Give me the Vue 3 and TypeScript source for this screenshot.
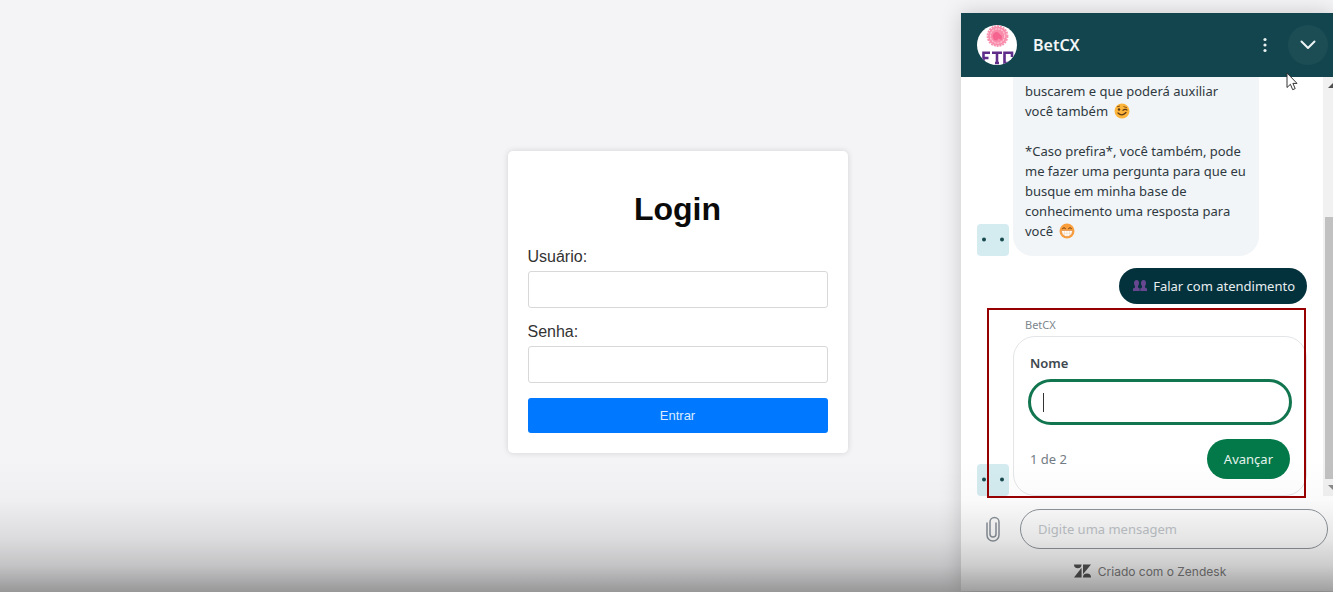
<script setup lang="ts">
import { ref } from 'vue'

const user = ref('')
const password = ref('')
const fullName = ref('')
const draft = ref('')
</script>

<template>
  <div class="page">
    <main class="stage">
      <form class="login" @submit.prevent>
        <h1>Login</h1>
        <label for="user">Usuário:</label>
        <input id="user" v-model="user" type="text" />
        <label for="password">Senha:</label>
        <input id="password" v-model="password" type="password" />
        <button type="submit">Entrar</button>
      </form>
    </main>

    <aside class="chat" aria-label="BetCX">
      <header class="chat-head">
        <svg class="brand" viewBox="0 0 40 40" aria-hidden="true">
          <defs><clipPath id="disc"><circle cx="20" cy="20" r="20" /></clipPath></defs>
          <g clip-path="url(#disc)">
            <rect width="40" height="40" fill="#fff" />
            <circle cx="20.500" cy="11" r="9.500" fill="#f98bab" />
            <circle cx="20.500" cy="11" r="10" fill="none" stroke="#f78fae" stroke-width="1.800" stroke-dasharray="2 .9" />
            <circle cx="20.500" cy="11" r="7.200" fill="none" stroke="#fdc3d2" stroke-width="1.200" stroke-dasharray="2.200 .9" />
            <path d="M15.500 11.500c.2-3 2.500-5 5-4.500l4.500 4-.5 4-3-1.500-1.500 2-3-.5z" fill="#f4648f" />
            <g fill="none" stroke="#5f2c8a" stroke-width="2.600">
              <path d="M13 27.800H6.500V42M6 33h5.500" />
              <path d="M15 27.800h10M20 27v11.500M18 38h4" />
              <path d="M35 32v-4.200h-7.500V38H35v-2" />
            </g>
          </g>
        </svg>
        <h2>BetCX</h2>
        <button class="icon-btn more" type="button" aria-label="Mais opções">
          <svg viewBox="0 0 4 16"><g fill="#e8f0f0"><circle cx="2" cy="2.500" r="1.600" /><circle cx="2" cy="8" r="1.600" /><circle cx="2" cy="13.500" r="1.600" /></g></svg>
        </button>
        <button class="icon-btn fold" type="button" aria-label="Minimizar">
          <svg viewBox="0 0 16 10"><path d="M1.500 1.500 8 8l6.500-6.500" fill="none" stroke="#eef4f4" stroke-width="2" stroke-linecap="round" stroke-linejoin="round" /></svg>
        </button>
      </header>

      <div class="log">
        <div class="messages">
          <div class="row">
            <svg class="bot" viewBox="0 0 32 32" aria-hidden="true"><rect width="32" height="32" rx="4" fill="#d4ebf0" /><g fill="#17494d"><circle cx="7" cy="15.500" r="2" /><circle cx="25" cy="15.500" r="2" /></g></svg>
            <div class="bubble">
              <p>
                buscarem e que poderá auxiliar<br />você também
                <svg class="emoji" viewBox="0 0 16 16" role="img" aria-label="piscadela">
                  <circle cx="8" cy="8" r="7.500" fill="#fdb43b" />
                  <path d="M3 3.800 6 3M9.500 3.500 13 4.800" stroke="#8a5313" fill="none" />
                  <circle cx="5" cy="6.500" r="1.200" fill="#5b3716" />
                  <path d="M9 7.300q2-1.600 4-.3M4 10q4 4 8-.500" stroke="#5b3716" stroke-width="1.200" fill="none" stroke-linecap="round" />
                </svg>
              </p>
              <p>
                *Caso prefira*, você também, pode<br />me fazer uma pergunta para que eu<br />busque em minha base de<br />conhecimento uma resposta para<br />você
                <svg class="emoji" viewBox="0 0 16 16" role="img" aria-label="sorriso">
                  <circle cx="8" cy="8" r="7.500" fill="#fb9f3c" />
                  <path d="M3.500 5.500q1.500-2 3 0M9.500 5.500q1.500-2 3 0" stroke="#6b3a12" fill="none" stroke-linecap="round" />
                  <path d="M2.500 7.500h11c0 3.500-2.200 6-5.500 6s-5.500-2.500-5.500-6z" fill="#fff" stroke="#d97f33" stroke-width=".6" />
                  <path d="M3 10.200h10M5.500 8v5M8 8v5.500M10.500 8v5" stroke="#f0c9a5" stroke-width=".5" />
                </svg>
              </p>
            </div>
          </div>

          <div class="reply">
            <svg viewBox="0 0 14 12" aria-hidden="true"><g fill="#67478f"><path d="M3.500 0C5.300 0 6 1.300 6 3S5.300 5.500 5 6v1.500l1.700 1V11H0V8.500l2-1V6C1.500 5.500 1 4.500 1 3s.8-3 2.500-3z" /><path d="M10.500 0C12.200 0 13 1.300 13 3s-.5 2.500-1 3v1.500l2 1V11H7.300V8.500l1.700-1V6C8.500 5.500 8 4.500 8 3s.8-3 2.500-3z" /></g></svg>
            <span>Falar com atendimento</span>
          </div>

          <div class="sender">BetCX</div>
          <div class="row">
            <svg class="bot" viewBox="0 0 32 32" aria-hidden="true"><rect width="32" height="32" rx="4" fill="#d4ebf0" /><g fill="#17494d"><circle cx="7" cy="15.500" r="2" /><circle cx="25" cy="15.500" r="2" /></g></svg>
            <form class="ask" @submit.prevent>
              <label for="full-name">Nome</label>
              <div class="field">
                <span class="caret"></span>
                <input id="full-name" v-model="fullName" type="text" />
              </div>
              <div class="ask-foot">
                <span>1 de 2</span>
                <button type="submit">Avançar</button>
              </div>
            </form>
          </div>
        </div>
        <div class="scroll" aria-hidden="true">
          <svg class="arrow" viewBox="0 0 10 5"><path d="M0 5 5 0l5 5z" fill="#505050" /></svg>
          <div class="track"><div class="thumb"></div></div>
          <svg class="arrow" viewBox="0 0 10 5"><path d="m0 0 5 5 5-5z" fill="#8a8a8a" /></svg>
        </div>
        <div class="highlight"></div>
      </div>

      <footer class="composer">
        <div class="compose-row">
          <button class="clip" type="button" aria-label="Anexar arquivo">
            <svg viewBox="0 0 14 26"><path d="M10 7v11a3 3 0 0 1-6 0V6a4.500 4.500 0 0 1 9 0v13a6 6 0 0 1-12 0V7" fill="none" stroke="#8b939b" stroke-width="1.500" stroke-linecap="round" /></svg>
          </button>
          <input v-model="draft" type="text" placeholder="Digite uma mensagem" aria-label="Digite uma mensagem" />
        </div>
        <a class="credit" href="#">
          <svg viewBox="0 0 18 14" aria-hidden="true"><g fill="#555"><path d="M0 0h8a4 4 0 0 1-8 0z" /><path d="M8 3.500V14H0z" /><path d="M9.500 0H18L9.500 10.500z" /><path d="M9.500 14a4.250 4.250 0 0 1 8.500 0z" /></g></svg>
          <span>Criado com o Zendesk</span>
        </a>
      </footer>
    </aside>

    <svg class="pointer" viewBox="0 0 12 19" aria-hidden="true"><path d="M1 1v14.500l3.400-3.200 2.300 5.400 2.500-1.100-2.300-5.200H11z" fill="#fff" stroke="#333" /></svg>
    <div class="shade"></div>
  </div>
</template>

<style>
body {
  margin: 0;
}
</style>

<style scoped>
* {
  box-sizing: border-box;
}
.page {
  position: relative;
  min-height: 100vh;
  overflow: hidden;
  background: #f4f4f6;
  font-family: "Liberation Sans", Arial, sans-serif;
}
button,
input {
  font-family: inherit;
}
.stage {
  display: flex;
  align-items: center;
  justify-content: center;
  min-height: 100vh;
  padding: 12px 0 0 22px;
}
.login {
  display: flex;
  flex-direction: column;
  width: 340px;
  padding: 20px;
  border-radius: 5px;
  background: #fff;
  box-shadow: 0 0 6px rgba(0, 0, 0, 0.14);
}
.login h1 {
  margin: 20px 0;
  font-size: 32px;
  line-height: 37px;
  text-align: center;
  color: #0a0a0a;
}
.login label {
  margin-bottom: 5px;
  font-size: 16px;
  line-height: 18px;
  color: #333;
}
.login input {
  height: 37px;
  margin-bottom: 15px;
  padding: 0 10px;
  border: 1px solid #d8d8d8;
  border-radius: 3px;
  background: #fff;
  font-size: 13px;
}
.login button {
  height: 35px;
  border: 0;
  border-radius: 3px;
  background: #0078ff;
  color: #dcecff;
  font-size: 13px;
}
.chat {
  position: absolute;
  top: 13px;
  right: 0;
  bottom: 1px;
  display: flex;
  flex-direction: column;
  width: 372px;
  background: #fff;
  box-shadow: 0 0 20px rgba(0, 0, 0, 0.18);
  font-family: "Noto Sans", "Open Sans", sans-serif;
  font-size: 13px;
}
.chat-head {
  display: flex;
  align-items: center;
  height: 64px;
  padding: 0 5px 0 16px;
  background: #13454e;
  color: #f2f6f6;
}
.brand {
  width: 40px;
  height: 40px;
}
.chat-head h2 {
  flex: 1;
  margin: 0 0 0 16px;
  font-size: 16px;
  font-weight: 600;
}
.icon-btn {
  display: flex;
  align-items: center;
  justify-content: center;
  width: 40px;
  height: 40px;
  padding: 0;
  border: 0;
  border-radius: 50%;
  background: transparent;
}
.more {
  margin-right: 3px;
}
.more svg {
  width: 4px;
  height: 16px;
}
.fold {
  background: #1c4d55;
}
.fold svg {
  width: 16px;
  height: 10px;
}
.log {
  position: relative;
  display: flex;
  flex: 1;
  min-height: 0;
}
.messages {
  display: flex;
  flex: 1;
  flex-direction: column;
  justify-content: flex-end;
  min-height: 0;
  padding: 0 16px;
  overflow: hidden;
}
.row {
  display: flex;
  flex: none;
  align-items: flex-end;
  gap: 4px;
}
.bot {
  flex: none;
  width: 32px;
  height: 32px;
}
.bubble {
  width: 246px;
  padding: 4px 12px 15px;
  border-radius: 0 0 20px 20px;
  background: #f1f5f8;
  color: #2f3941;
  line-height: 20px;
  white-space: nowrap;
}
.bubble p {
  margin: 0;
}
.bubble p + p {
  margin-top: 20px;
}
.emoji {
  width: 16px;
  height: 16px;
  margin-left: 3px;
  vertical-align: -3px;
}
.reply {
  display: flex;
  flex: none;
  align-items: center;
  align-self: flex-end;
  gap: 6px;
  height: 36px;
  margin-top: 12px;
  padding: 0 12px 0 14px;
  border-radius: 18px;
  background: #03323d;
  color: #e8eef0;
}
.reply svg {
  width: 14px;
  height: 12px;
}
.sender {
  flex: none;
  margin: 12px 0 3px;
  padding-left: 48px;
  color: #7d868e;
  font-size: 11px;
  line-height: 17px;
}
.ask {
  flex: 1;
  padding: 16px 14px;
  border: 1px solid #e3e5e7;
  border-radius: 22px;
}
.ask label {
  display: block;
  padding-left: 2px;
  color: #40474e;
  font-weight: 600;
  line-height: 20px;
}
.field {
  display: flex;
  align-items: center;
  height: 46px;
  margin-top: 6px;
  padding: 0 12px;
  border: 3px solid #11754f;
  border-radius: 23px;
}
.caret {
  width: 1px;
  height: 19px;
  background: #333;
}
.field input {
  flex: 1;
  min-width: 0;
  border: 0;
  outline: 0;
  background: transparent;
  font-size: 13px;
}
.ask-foot {
  display: flex;
  align-items: center;
  justify-content: space-between;
  margin-top: 14px;
  padding: 0 2px;
  color: #737c84;
}
.ask-foot button {
  height: 40px;
  padding: 0 17px;
  border: 0;
  border-radius: 20px;
  background: #037949;
  color: #e6f3ed;
  font-size: 13px;
}
.scroll {
  display: flex;
  flex-direction: column;
  align-items: flex-start;
  width: 10px;
  overflow: hidden;
  background: #f1f1f1;
}
.arrow {
  flex: none;
  width: 10px;
  height: 17px;
  padding: 6px 0;
  margin-left: 5px;
}
.track {
  display: flex;
  flex: 1;
  align-self: stretch;
  align-items: flex-end;
}
.thumb {
  width: 8px;
  height: 68%;
  margin-left: 2px;
  background: #c1c1c1;
}
.highlight {
  position: absolute;
  right: 27px;
  bottom: -2px;
  z-index: 3;
  width: 319px;
  height: 190px;
  border: 2px solid #960000;
}
.composer {
  padding: 13px 5px 0 16px;
}
.compose-row {
  display: flex;
  align-items: center;
  gap: 11px;
}
.clip {
  display: flex;
  justify-content: center;
  width: 32px;
  padding: 0;
  border: 0;
  background: transparent;
}
.clip svg {
  width: 14px;
  height: 26px;
}
.compose-row input {
  flex: 1;
  min-width: 0;
  height: 40px;
  padding: 0 17px;
  border: 1px solid #8f959b;
  border-radius: 20px;
  background: transparent;
  font-size: 13px;
}
.compose-row input::placeholder {
  color: #c3c8cd;
  opacity: 1;
}
.credit {
  display: flex;
  align-items: center;
  justify-content: center;
  gap: 7px;
  height: 42px;
  padding: 2px 5px 0 0;
  color: #808080;
  font-family: Inter, sans-serif;
  font-size: 12px;
  text-decoration: none;
}
.credit svg {
  width: 17px;
  height: 14px;
}
.pointer {
  position: absolute;
  top: 72px;
  right: 35px;
  width: 12px;
  height: 19px;
}
.shade {
  position: absolute;
  right: 0;
  bottom: 0;
  left: 0;
  height: 132px;
  background: linear-gradient(rgba(0, 0, 0, 0), rgba(0, 0, 0, 0.02) 30%, rgba(0, 0, 0, 0.1) 60%, rgba(0, 0, 0, 0.2) 80%, rgba(0, 0, 0, 0.38));
  pointer-events: none;
}
</style>
